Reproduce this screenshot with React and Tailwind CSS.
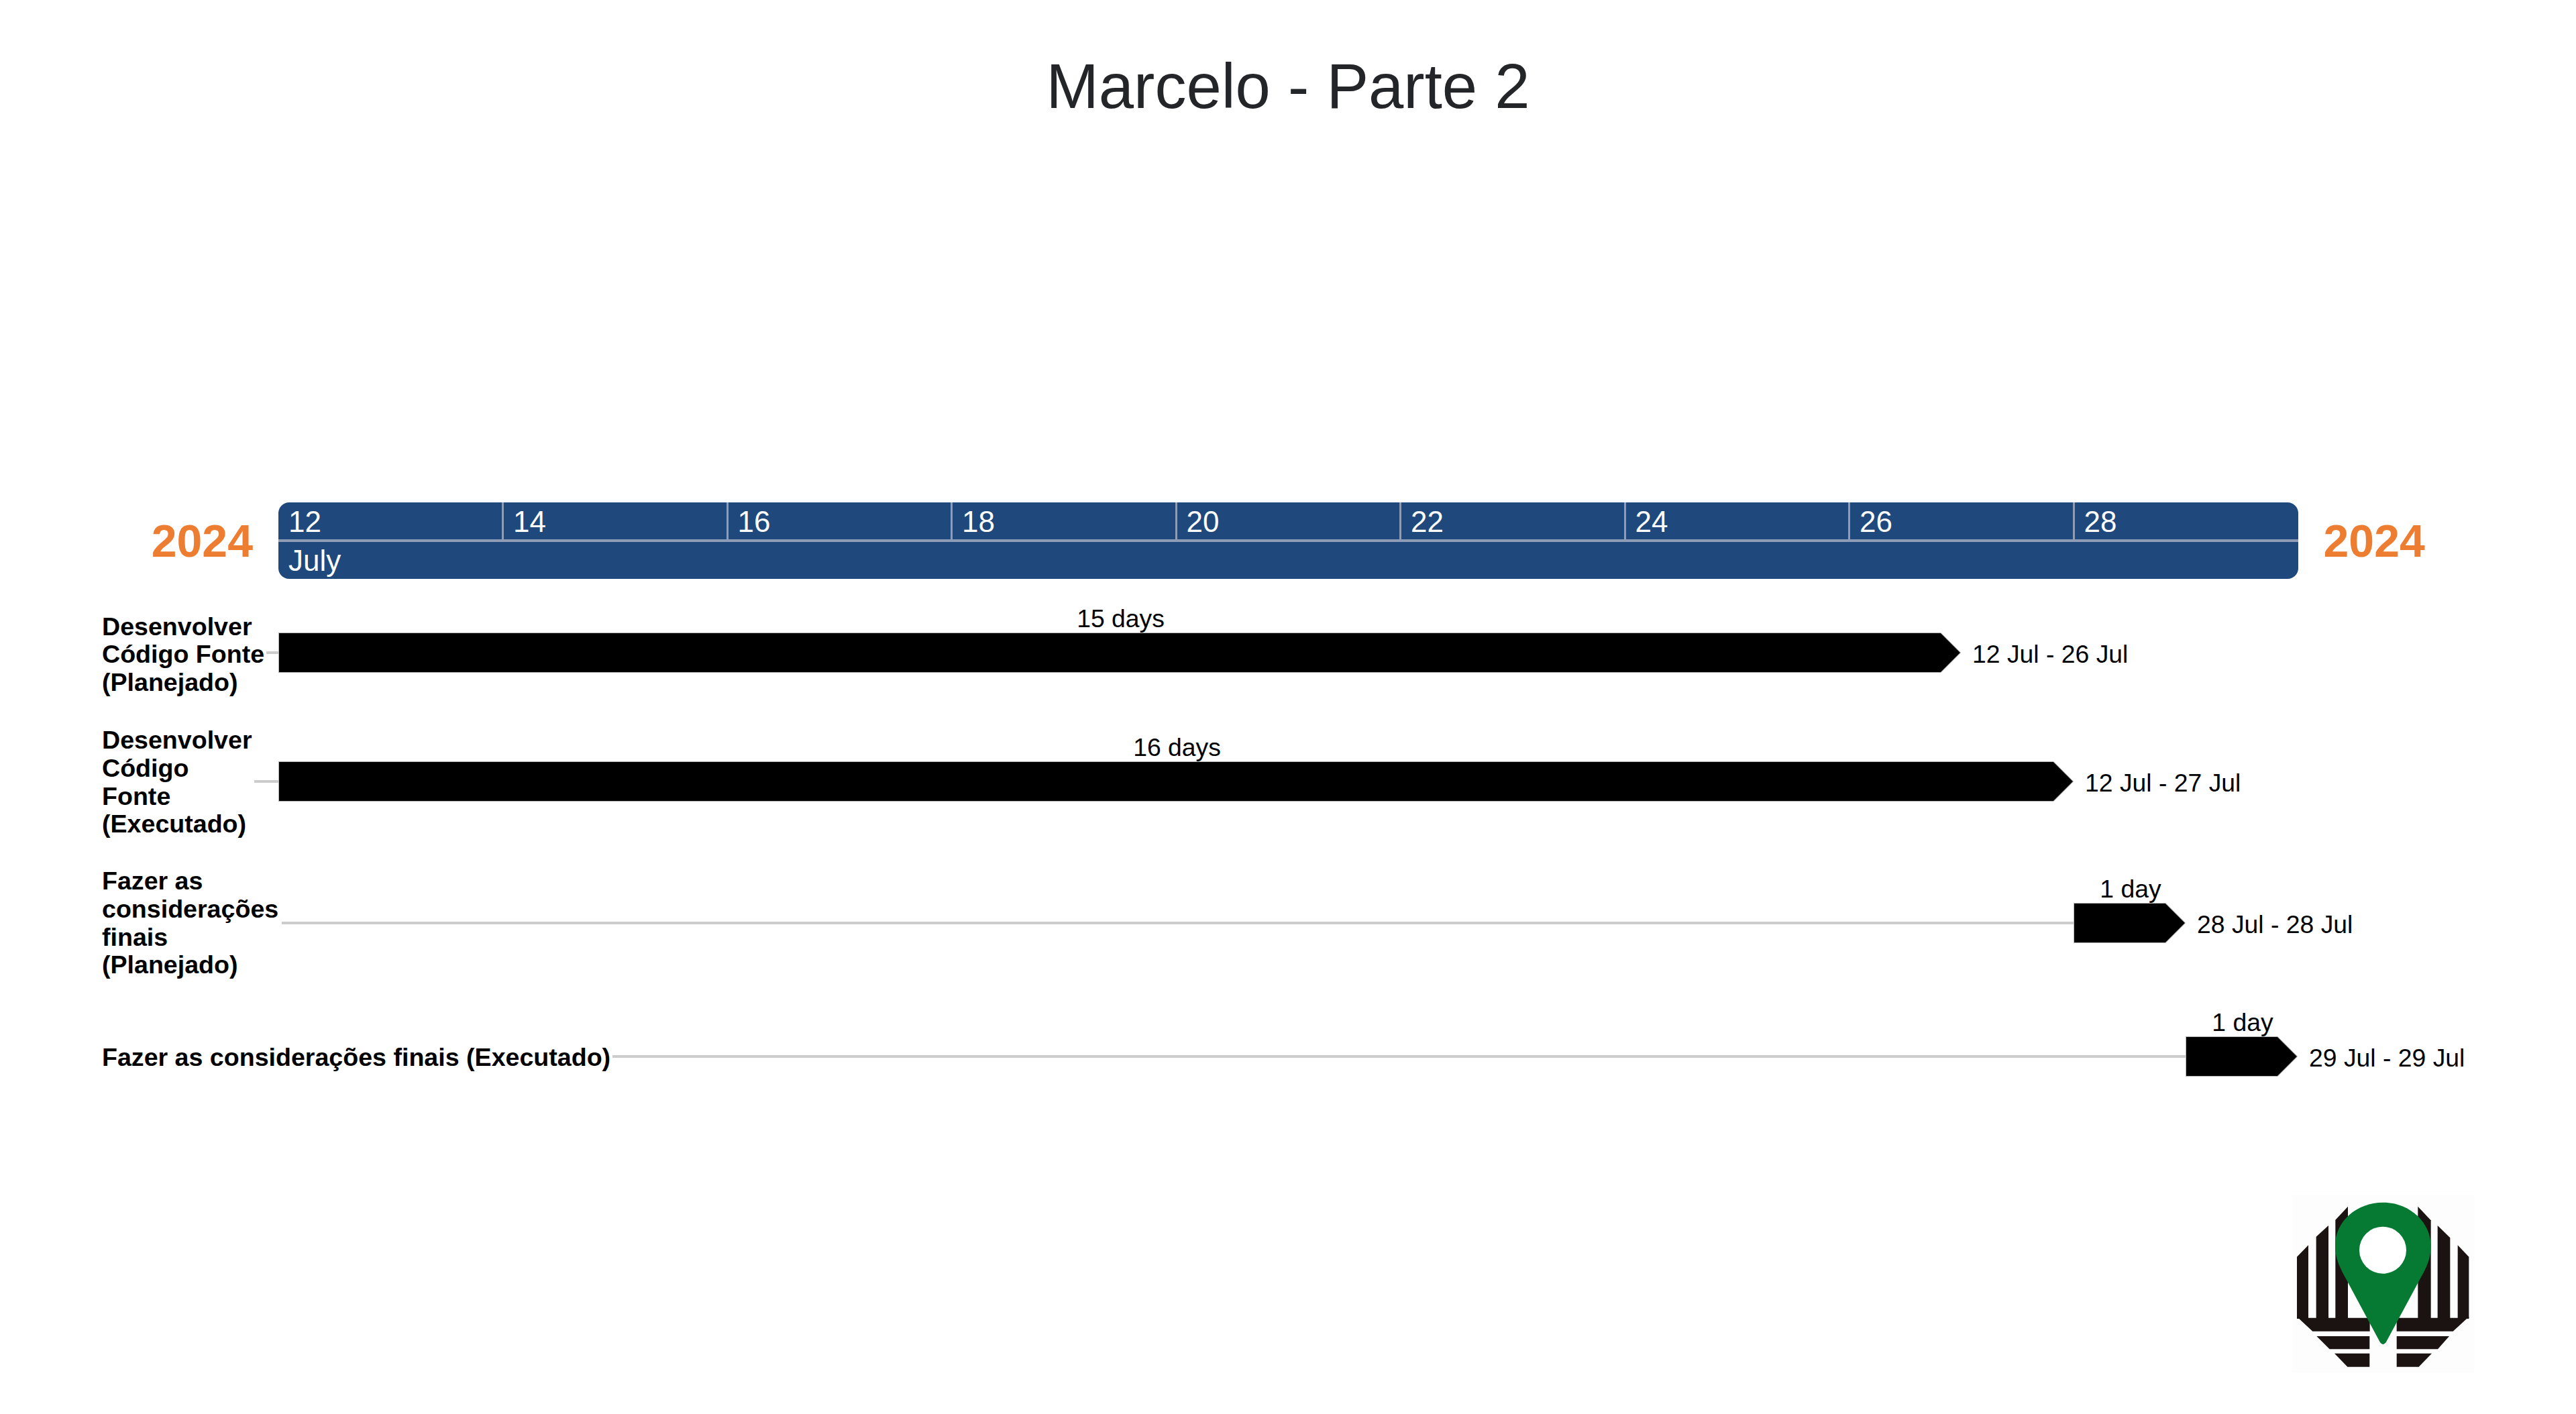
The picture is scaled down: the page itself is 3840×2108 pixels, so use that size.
const days = ["12", "14", "16", "18", "20", "22", "24", "26", "28"];

const rows = [
  { lines: ["Desenvolver", "Código Fonte", "(Planejado)"], left: 263, gap: "ml-[3px]", barW: 2508, dur: "15 days", date: "12 Jul - 26 Jul", mt: "mt-[25px]", lift: "mt-[7px]" },
  { lines: ["Desenvolver", "Código", "Fonte", "(Executado)"], left: 263, gap: "ml-[3px]", barW: 2676, dur: "16 days", date: "12 Jul - 27 Jul", mt: "mt-[22px]", lift: "mt-[4px]" },
  { lines: ["Fazer as", "considerações", "finais", "(Planejado)"], left: 2939, gap: "ml-[5px]", barW: 167, dur: "1 day", date: "28 Jul - 28 Jul", mt: "mt-[41px]", lift: "mt-[2px]" },
  { lines: ["Fazer as considerações finais (Executado)"], left: 3106, gap: "ml-[3px]", barW: 167, dur: "1 day", date: "29 Jul - 29 Jul", mt: "mt-[29px]", lift: "mt-[5px]" },
];

function Row({ r }) {
  return (
    <div className={`flex h-[170px] items-center pl-[152px] ${r.mt}`}>
      <div className="flex shrink-0 items-center" style={{ width: r.left }}>
        <div className={`shrink-0 whitespace-nowrap text-[37.6px] leading-[41.6px] font-bold text-black ${r.lift}`}>
          {r.lines.map((l) => (
            <div key={l}>{l}</div>
          ))}
        </div>
        <div className={`h-[4px] flex-1 bg-[#cccccc] ${r.gap}`} />
      </div>
      <div className="relative h-[60px] shrink-0" style={{ width: r.barW }}>
        <svg className="block" width={r.barW} height="60" viewBox={`0 0 ${r.barW} 60`}>
          <polygon
            points={`0.5,0.5 ${r.barW - 30},0.5 ${r.barW - 0.5},30 ${r.barW - 30},59.5 0.5,59.5`}
            fill="#000000"
            stroke="#b5b5b5"
            strokeWidth="1"
          />
        </svg>
        <div className="absolute bottom-full left-0 right-0 mb-[0px] pl-[3px] text-center text-[37.33px] leading-[42px] whitespace-nowrap text-black">
          {r.dur}
        </div>
      </div>
      <div className="ml-[17px] mt-[5px] text-[37.33px] leading-[42px] whitespace-nowrap text-black">{r.date}</div>
    </div>
  );
}

function Logo() {
  return (
    <svg width="340" height="300" viewBox="0 0 1020 900">
      <rect x="170" y="60" width="815" height="795" fill="#fdfdfd" />
      <g fill="#1a1311">
        <polygon points="192,335 243,283 243,612 192,612" />
        <polygon points="278,245 333,195 333,612 278,612" />
        <polygon points="364,170 420,110 420,612 364,612" />
        <polygon points="192,608 518,608 518,668 262,668 192,603" />
        <polygon points="280,690 517,690 517,748 338,748" />
        <polygon points="360,767 517,767 517,827 418,827" />
        <polygon points="733,110 791,172 791,612 733,612" />
        <polygon points="821,195 877,250 877,612 821,612" />
        <polygon points="911,283 961,335 961,612 911,612" />
        <polygon points="638,608 961,608 961,603 890,668 638,668" />
        <polygon points="638,690 873,690 822,748 638,748" />
        <polygon points="638,767 795,767 737,827 638,827" />
      </g>
      <path
        d="M363 285C363 175 460 92 577 92C695 92 791 180 791 285C791 345 770 385 745 430L590 718Q577 735 564 718L415 440C385 385 363 345 363 285Z"
        fill="#067a32"
      />
      <circle cx="576" cy="305" r="105" fill="#ffffff" />
    </svg>
  );
}

export default function App() {
  return (
    <div className="h-[2108px] w-[3840px] overflow-hidden bg-white font-['Liberation_Sans',Arial,sans-serif]">
      <h1 className="pt-[75px] text-center text-[94px] leading-[108px] font-normal text-[#242528]">Marcelo - Parte 2</h1>
      <div className="mt-[566px] flex items-center">
        <div className="w-[415px] shrink-0 pr-[38px] text-right text-[68px] leading-[78px] font-bold text-[#ed7d31]">2024</div>
        <div className="w-[3010.5px] shrink-0 overflow-hidden rounded-[16px] bg-[#1f497d] text-white">
          <div className="grid h-[58.5px] grid-cols-[336px_repeat(7,334.5px)_1fr] border-b-[4.5px] border-[#8f9cb5]">
            {days.map((d, i) => (
              <div
                key={d}
                className={`text-[44px] leading-[58px] ${i === 0 ? "pl-[15px]" : "pl-[14px]"} ${i < 8 ? "border-r-[3px] border-[#8f9cb5]" : ""}`}
              >
                {d}
              </div>
            ))}
          </div>
          <div className="h-[55px] pl-[15px] text-[44px] leading-[55px]">July</div>
        </div>
        <div className="ml-[38px] text-[68px] leading-[78px] font-bold text-[#ed7d31]">2024</div>
      </div>
      {rows.map((r) => (
        <Row key={r.date} r={r} />
      ))}
      <div className="mt-[102px] flex justify-end pr-[140px]">
        <Logo />
      </div>
    </div>
  );
}
